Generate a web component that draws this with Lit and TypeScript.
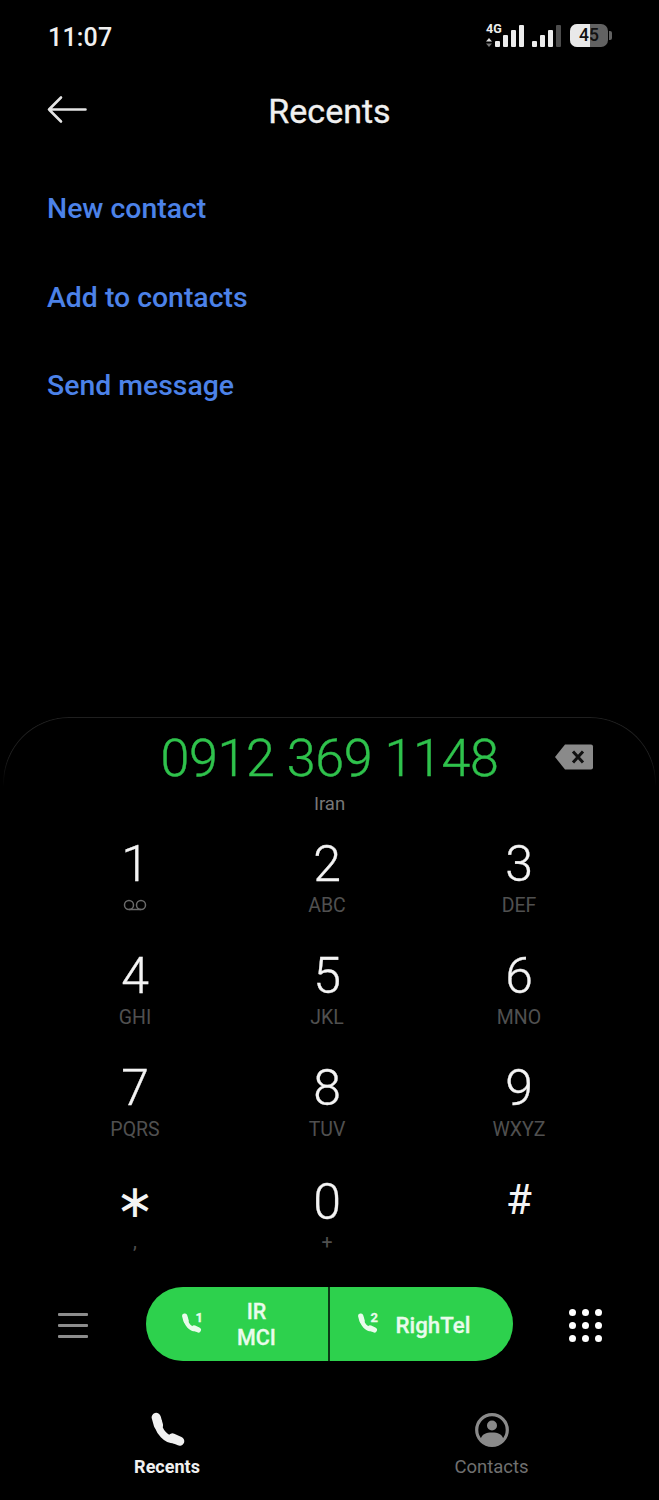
import { LitElement, html, css, svg } from "lit";
import { customElement } from "lit/decorators.js";

const handset = svg`<path d="M6.4 5C5.600 12 12 19 18.800 17.400" fill="none" stroke="currentColor" stroke-width="4.600"/><path d="M5.200 3.400 6.600 8.400M15.400 16.400 20 18.400" fill="none" stroke="currentColor" stroke-width="5.800" stroke-linecap="round"/>`;

const keys = [
  { d: "1", l: "" },
  { d: "2", l: "ABC" },
  { d: "3", l: "DEF" },
  { d: "4", l: "GHI" },
  { d: "5", l: "JKL" },
  { d: "6", l: "MNO" },
  { d: "7", l: "PQRS" },
  { d: "8", l: "TUV" },
  { d: "9", l: "WXYZ" },
  { d: "\u2217", l: "," },
  { d: "0", l: "+" },
  { d: "#", l: "" },
];

@customElement("app-root")
export class AppRoot extends LitElement {
  static styles = css`
    :host {
      display: flex;
      flex-direction: column;
      width: 659px;
      height: 1500px;
      background: #000;
      color: #fff;
      font-family: Roboto, "Liberation Sans", sans-serif;
      overflow: hidden;
    }
    .status {
      height: 75px;
      flex: none;
      display: flex;
      justify-content: space-between;
      align-items: flex-start;
      padding: 24px 47px 0 48px;
      box-sizing: border-box;
    }
    .time {
      font-size: 25px;
      line-height: 26px;
      margin-top: 1px;
      font-weight: 500;
      letter-spacing: 0.2px;
      color: #f0f0f0;
    }
    .sys {
      display: flex;
      align-items: flex-end;
      height: 23px;
    }
    .net {
      display: flex;
      flex-direction: column;
      justify-content: space-between;
      height: 23px;
      width: 9px;
    }
    .g4 {
      font-size: 12.500px;
      line-height: 10px;
      font-weight: 700;
      white-space: nowrap;
      color: #eee;
    }
    .arrows {
      display: block;
    }
    .bars {
      display: flex;
      align-items: flex-end;
      gap: 3px;
      height: 23px;
    }
    .bars.b {
      margin-left: 8px;
    }
    .bar {
      width: 5px;
      background: #ececec;
      border-radius: 1px;
    }
    .bar.dim {
      background: #4d4d4d;
    }
    .h1 {
      height: 6px;
    }
    .h2 {
      height: 12px;
    }
    .h3 {
      height: 17px;
    }
    .h4 {
      height: 22px;
    }
    .batt {
      position: relative;
      display: flex;
      width: 38px;
      height: 23px;
      margin-left: 9px;
      border-radius: 7px;
      overflow: hidden;
      background: #626262;
      color: #111;
      font-size: 17.500px;
      font-weight: 500;
      line-height: 23px;
      justify-content: center;
    }
    .batt::before {
      content: "";
      position: absolute;
      inset: 0 18px 0 0;
      background: #e9e9e9;
    }
    .batt span {
      position: relative;
    }
    .nub {
      width: 3px;
      height: 9px;
      margin: 0 0 7px 1px;
      background: #626262;
      border-radius: 0 2px 2px 0;
    }
    .head {
      position: relative;
      height: 72px;
      flex: none;
      display: flex;
      align-items: center;
      justify-content: center;
      font-size: 34px;
      font-weight: 400;
      color: #f0f0f0;
      -webkit-text-stroke: 0.35px #f0f0f0;
    }
    .back {
      position: absolute;
      left: 47px;
      top: 20px;
    }
    .actions {
      flex: 1;
      padding: 35px 47px 0;
    }
    .action {
      height: 88.5px;
      line-height: 54px;
      font-size: 28.400px;
      font-weight: 500;
      color: #4c82e8;
    }
    .panel {
      position: relative;
      flex: none;
      height: 783px;
      box-sizing: border-box;
      padding-top: 12px;
    }
    .panel::before {
      content: "";
      position: absolute;
      left: 3px;
      right: 3px;
      top: 0;
      height: 70px;
      box-sizing: border-box;
      border: 1px solid #1f1f1f;
      border-bottom: none;
      border-radius: 66px 66px 0 0;
      -webkit-mask-image: linear-gradient(#000 55%, transparent);
      mask-image: linear-gradient(#000 55%, transparent);
    }
    .num {
      position: relative;
      height: 60px;
      text-align: center;
      font-size: 52px;
      letter-spacing: -0.35px;
      line-height: 60px;
      font-weight: 300;
      color: #2fc24c;
      -webkit-text-stroke: 0.4px #2fc24c;
    }
    .del {
      position: absolute;
      left: 554px;
      top: 14px;
    }
    .loc {
      margin-top: 5px;
      height: 20px;
      line-height: 20px;
      text-align: center;
      font-size: 18.500px;
      color: #777;
    }
    .pad {
      margin-top: 22px;
      display: grid;
      grid-template-columns: repeat(3, 192px);
      grid-auto-rows: 112px;
      padding-left: 39px;
    }
    .key {
      display: flex;
      flex-direction: column;
      align-items: center;
    }
    .d {
      height: 56px;
      line-height: 56px;
      font-size: 50px;
      font-weight: 300;
      color: #f4f4f4;
      -webkit-text-stroke: 0.3px #f4f4f4;
    }
    .d.star {
      font-family: "DejaVu Sans", sans-serif;
      font-size: 46px;
      font-weight: 400;
      margin-top: 1px;
      -webkit-text-stroke: 0;
    }
    .d.hash {
      font-size: 42px;
      font-weight: 400;
      -webkit-text-stroke: 0;
    }
    .d.low {
      margin-top: 2px;
    }
    .l {
      margin-top: 4px;
      height: 20px;
      line-height: 20px;
      font-size: 19.500px;
      color: #505050;
    }
    .l.lowl {
      margin-top: 3px;
    }
    .l.star {
      margin-top: 3px;
    }
    .vm {
      display: block;
      margin: 7px auto 0;
    }
    .calls {
      height: 74px;
      margin-top: 3px;
      display: flex;
      align-items: center;
      padding: 0 58px;
      justify-content: space-between;
    }
    .menu {
      display: flex;
      flex-direction: column;
      gap: 8px;
      width: 30px;
      margin-top: 2px;
    }
    .menu i {
      display: block;
      height: 3px;
      border-radius: 1px;
      background: #8c8c8c;
    }
    .callbtn {
      display: flex;
      width: 367px;
      height: 74px;
      margin-left: 1px;
      border-radius: 37px;
      overflow: hidden;
      gap: 2px;
      background: #0c3a16;
    }
    .sim {
      position: relative;
      display: flex;
      align-items: center;
      justify-content: flex-start;
      background: #2dd14d;
      color: #e9fbec;
      font-size: 21.500px;
      line-height: 26px;
      font-weight: 500;
      box-sizing: border-box;
      -webkit-text-stroke: 0.3px #e9fbec;
    }
    .sim svg {
      flex: none;
    }
    .sim.one {
      width: 182px;
      padding-left: 34px;
    }
    .sim.two {
      width: 183px;
      padding-left: 26px;
    }
    .sim sup {
      position: absolute;
      top: 24px;
      font-size: 13px;
      line-height: 13px;
      font-weight: 700;
    }
    .sim.one sup {
      left: 50px;
    }
    .sim.two sup {
      left: 41px;
    }
    .sim .n {
      text-align: center;
      padding-top: 2px;
    }
    .sim.one .n {
      width: 58px;
      margin-left: 26px;
    }
    .sim.two .n {
      margin-left: 18px;
      font-size: 22.300px;
    }
    .dots {
      display: grid;
      grid-template-columns: repeat(3, 7px);
      gap: 6px;
      margin: 2px -1px 0 0;
    }
    .dots i {
      display: block;
      width: 7px;
      height: 7px;
      border-radius: 50%;
      background: #fff;
    }
    .nav {
      display: flex;
      padding-top: 51px;
    }
    .nav-item {
      display: flex;
      flex-direction: column;
      align-items: center;
      font-size: 18.500px;
      line-height: 20px;
      color: #707070;
    }
    .nav-item svg {
      display: block;
      margin-bottom: 7px;
    }
    .nav-item.on {
      color: #f0f0f0;
      font-size: 18px;
      font-weight: 700;
      width: 334px;
    }
    .nav-item.on svg {
      margin-left: -1px;
    }
    .nav-item.off {
      width: 315px;
    }
    .nav-item.off svg {
      margin-top: -1px;
      margin-bottom: 8px;
    }
  `;

  render() {
    return html`
      <div class="status">
        <div class="time">11:07</div>
        <div class="sys">
          <div class="net">
            <span class="g4">4G</span>
            <svg class="arrows" width="6" height="9" viewBox="0 0 6 9"><path d="M3 0 6 3.500H0z" fill="#ddd"/><path d="M3 9 6 5.500H0z" fill="#777"/></svg>
          </div>
          <div class="bars a"><i class="bar h1"></i><i class="bar h2"></i><i class="bar h3"></i><i class="bar h4"></i></div>
          <div class="bars b"><i class="bar h1"></i><i class="bar h2"></i><i class="bar h3"></i><i class="bar h4 dim"></i></div>
          <div class="batt"><span>45</span></div>
          <div class="nub"></div>
        </div>
      </div>
      <div class="head">
        <svg class="back" width="41" height="30" viewBox="0 0 41 30"><path d="M38.500 14.500H2M14 2.500 2 14.500l12 12" fill="none" stroke="#e4e4e4" stroke-width="2.600" stroke-linecap="round" stroke-linejoin="round"/></svg>
        Recents
      </div>
      <div class="actions">
        <div class="action">New contact</div>
        <div class="action">Add to contacts</div>
        <div class="action">Send message</div>
      </div>
      <div class="panel">
        <div class="num">0912 369 1148
          <svg class="del" width="40" height="28" viewBox="0 0 40 28"><path d="M11 1.500h26a2 2 0 0 1 2 2v21a2 2 0 0 1-2 2H11L1 14z" fill="#8a8a8a"/><path d="M19 8.500 29 19.500M29 8.500 19 19.500" stroke="#111" stroke-width="3"/></svg>
        </div>
        <div class="loc">Iran</div>
        <div class="pad">
          ${keys.map((k, i) => html`
            <div class="key">
              <div class="d ${k.d === "\u2217" ? "star" : k.d === "#" ? "hash" : ""} ${k.d === "0" ? "low" : ""}">${k.d}</div>
              ${i === 0
                ? html`<svg class="vm" width="26" height="14" viewBox="0 0 26 14"><circle cx="7" cy="6" r="4.500" fill="none" stroke="#6a6a6a" stroke-width="1.500"/><circle cx="19" cy="6" r="4.500" fill="none" stroke="#6a6a6a" stroke-width="1.500"/><path d="M7 10.500h12" stroke="#6a6a6a" stroke-width="1.500"/></svg>`
                : html`<div class="l ${k.d === "0" ? "lowl" : ""} ${k.d === "\u2217" ? "star" : ""}">${k.l}</div>`}
            </div>`)}
        </div>
        <div class="calls">
          <div class="menu"><i></i><i></i><i></i></div>
          <div class="callbtn">
            <div class="sim one">
              <svg width="22" height="22" viewBox="0 0 24 24">${handset}</svg><sup>1</sup>
              <div class="n">IR<br />MCI</div>
            </div>
            <div class="sim two">
              <svg width="22" height="22" viewBox="0 0 24 24">${handset}</svg><sup>2</sup>
              <div class="n">RighTel</div>
            </div>
          </div>
          <div class="dots">${Array.from({ length: 9 }, () => html`<i></i>`)}</div>
        </div>
        <div class="nav">
          <div class="nav-item on">
            <svg width="38" height="38" viewBox="0 0 24 24">${handset}</svg>
            Recents
          </div>
          <div class="nav-item off">
            <svg width="38" height="38" viewBox="-1 -1 38 38"><circle cx="18" cy="18" r="15.300" fill="none" stroke="#8a8a8a" stroke-width="3.200"/><circle cx="18" cy="13.500" r="5" fill="#8a8a8a"/><path d="M6.500 27.500C8 22 12 20.500 18 20.500S28 22 29.500 27.500A15 15 0 0 1 6.500 27.500z" fill="#8a8a8a"/></svg>
            Contacts
          </div>
        </div>
      </div>
    `;
  }
}
